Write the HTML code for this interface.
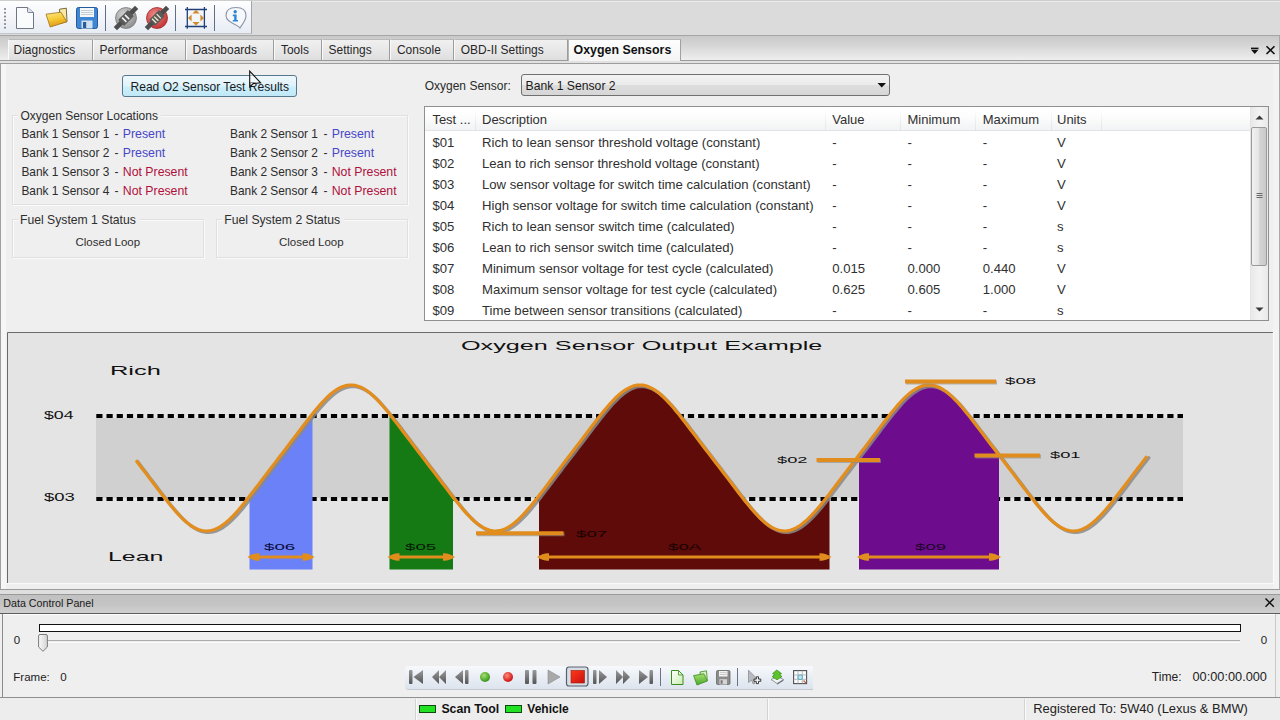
<!DOCTYPE html>
<html><head><meta charset="utf-8"><style>
*{margin:0;padding:0;box-sizing:border-box}
html,body{width:1280px;height:720px;overflow:hidden;background:#efefef;font-family:"Liberation Sans",sans-serif;color:#1c1c1c;position:relative}
.a{position:absolute}
.t{position:absolute;white-space:nowrap;line-height:1}
</style></head><body>
<div class="a" style="left:0;top:0;width:1280px;height:35px;background:#dbdbdb;border-top:1px solid #cdcdcd;box-shadow:inset 0 1px 0 #ebebeb"></div>
<div class="a" style="left:0;top:35px;width:1280px;height:1px;background:#a6a6a6"></div>
<div class="a" style="left:0;top:36px;width:1280px;height:24px;background:linear-gradient(#c9c9c9,#d6d6d6 40%,#e6e6e6 80%,#efefef)"></div>
<div class="a" style="left:0;top:1px;width:252px;height:33px;background:linear-gradient(#fefefe,#f3f5f9 50%,#e7ecf4);border-right:1px solid #a3a6ab;border-bottom:1px solid #c4c6ca"></div>

<svg class="a" style="left:0;top:0" width="252" height="34" viewBox="0 0 252 34">
 <g fill="#6a6a6a"><rect x="4.2" y="8.2" width="1.6" height="1.6"/><rect x="4.2" y="11.9" width="1.6" height="1.6"/><rect x="4.2" y="15.7" width="1.6" height="1.6"/><rect x="4.2" y="19.4" width="1.6" height="1.6"/><rect x="4.2" y="23.2" width="1.6" height="1.6"/><rect x="4.2" y="26.9" width="1.6" height="1.6"/></g>
 <!-- new doc -->
 <path d="M16.5 7.5 H27.5 L33.5 12.5 V28.5 H16.5 Z" fill="#fafbfd" stroke="#6f7686" stroke-width="1"/>
 <path d="M27.5 7.5 V11.5 Q27.5 12.5 28.5 12.5 H33.5" fill="#dde2ea" stroke="#6f7686" stroke-width="0.9"/>
 <!-- folder -->
 <defs><linearGradient id="fg" x1="0" y1="0" x2="0.3" y2="1"><stop offset="0" stop-color="#fde88c"/><stop offset="0.5" stop-color="#f6cc3a"/><stop offset="1" stop-color="#e39a12"/></linearGradient></defs>
 <path d="M59.5 9.2 L66.3 8.2 L67 21.6 L60 23.5 Z" fill="#f8e9a8" stroke="#6b5a28" stroke-width="0.9"/>
 <path d="M46 14.2 L61 12.2 L66.8 21.8 L50.2 27 Z" fill="url(#fg)" stroke="#9a7418" stroke-width="0.8"/>
 <!-- save -->
 <rect x="76.5" y="7.5" width="21" height="21" rx="2" fill="#3f86d2" stroke="#2658a0"/>
 <rect x="80" y="8" width="14" height="9" fill="#f4f6f8"/>
 <path d="M81 10.5h12M81 12.5h12M81 14.5h12" stroke="#b9c3cc" stroke-width="0.8"/>
 <rect x="81.5" y="20.5" width="11" height="8" fill="#cfe0f2"/>
 <rect x="83" y="22" width="3.2" height="6" fill="#2a5a98"/>
 <!-- separators -->
 <path d="M105.5 5V31M175.5 5V31M214.5 5V31" stroke="#5f6f88" stroke-width="1"/>
 <defs><radialGradient id="cg1" cx="0.4" cy="0.35" r="0.7"><stop offset="0" stop-color="#d6d6d6"/><stop offset="1" stop-color="#8a8a8a"/></radialGradient>
 <radialGradient id="cg2" cx="0.4" cy="0.35" r="0.7"><stop offset="0" stop-color="#f08a8a"/><stop offset="1" stop-color="#c23030"/></radialGradient></defs>
 <!-- gray connector -->
 <circle cx="126" cy="18" r="10.5" fill="url(#cg1)" stroke="#7a7a7a" stroke-width="0.8"/>
 <g transform="translate(126 18) rotate(-45)"><rect x="-15" y="-2.3" width="30" height="4.6" fill="#4d4d4d"/><rect x="-7" y="-4.3" width="14" height="8.6" rx="1" fill="#5a5a5a"/><path d="M-2.5 -3 V3 M1.5 -3 V3" stroke="#f2f2f2" stroke-width="1.6"/></g>
 <!-- red connector -->
 <circle cx="157" cy="18" r="10.5" fill="url(#cg2)" stroke="#9a2a2a" stroke-width="0.8"/>
 <g transform="translate(157 18) rotate(-45)"><rect x="-15" y="-2.3" width="30" height="4.6" fill="#4d4d4d"/><rect x="-7" y="-4.3" width="14" height="8.6" rx="1" fill="#5a5a5a"/><path d="M-4 -3 V3 M-1 -3 V3 M2.5 -3 V3" stroke="#f4ecc8" stroke-width="1.3"/></g>
 <!-- fit -->
 <rect x="190" y="12" width="12" height="12" fill="#f3f5f8"/>
 <path d="M185 9.5H207M185 26.5H207M187.3 7V28.7M204.4 7V28.7" stroke="#1e3f78" stroke-width="1.3"/>
 <path d="M196 9.8 L199.6 13.6 H192.4Z M196 25.8 L199.6 22 H192.4Z M188 18 L191.6 14.4 V21.6Z M204 18 L200.4 14.4 V21.6Z" fill="#cf8c2c"/>
 <!-- info -->
 <path d="M236 7.5 C243 7.5 246 11 246 15.5 C246 21 242 24 240 28 C238 24 226 23 226 15.5 C226 11 229 7.5 236 7.5Z" fill="#f6f8fb" stroke="#8a95a8" stroke-width="1.1"/>
 <circle cx="235.2" cy="11.8" r="1.7" fill="#2a86d4"/>
 <path d="M232.8 14.6 H236.6 V20 H238 V21.6 H232.8 V20 H234.2 V16.2 H232.8Z" fill="#2a86d4"/>
</svg>

<div class="a" style="left:0;top:60px;width:1280px;height:1px;background:#9a9a9a"></div>
<div class="a" style="left:0;top:61px;width:1280px;height:2px;background:#e2e2e2"></div>
<div class="a" style="left:0;top:63px;width:1280px;height:1px;background:#9d9d9d"></div>
<div class="a" style="left:8px;top:39px;width:85px;height:21px;background:linear-gradient(#f0f0f0,#e8e8e8 50%,#dedede);border-left:1px solid #fafafa;border-right:1px solid #9c9c9c;border-top:1px solid #b9b9b9"></div>
<div class="a" style="left:93px;top:39px;width:93px;height:21px;background:linear-gradient(#f0f0f0,#e8e8e8 50%,#dedede);border-left:1px solid #fafafa;border-right:1px solid #9c9c9c;border-top:1px solid #b9b9b9"></div>
<div class="a" style="left:186px;top:39px;width:88px;height:21px;background:linear-gradient(#f0f0f0,#e8e8e8 50%,#dedede);border-left:1px solid #fafafa;border-right:1px solid #9c9c9c;border-top:1px solid #b9b9b9"></div>
<div class="a" style="left:274px;top:39px;width:48px;height:21px;background:linear-gradient(#f0f0f0,#e8e8e8 50%,#dedede);border-left:1px solid #fafafa;border-right:1px solid #9c9c9c;border-top:1px solid #b9b9b9"></div>
<div class="a" style="left:322px;top:39px;width:68px;height:21px;background:linear-gradient(#f0f0f0,#e8e8e8 50%,#dedede);border-left:1px solid #fafafa;border-right:1px solid #9c9c9c;border-top:1px solid #b9b9b9"></div>
<div class="a" style="left:390px;top:39px;width:64px;height:21px;background:linear-gradient(#f0f0f0,#e8e8e8 50%,#dedede);border-left:1px solid #fafafa;border-right:1px solid #9c9c9c;border-top:1px solid #b9b9b9"></div>
<div class="a" style="left:454px;top:39px;width:114px;height:21px;background:linear-gradient(#f0f0f0,#e8e8e8 50%,#dedede);border-left:1px solid #fafafa;border-right:1px solid #9c9c9c;border-top:1px solid #b9b9b9"></div>
<div class="a" style="left:568px;top:39px;width:113px;height:22px;background:linear-gradient(#fefefe,#f4f4f4);border-left:1px solid #b5b5b5;border-right:1px solid #a0a0a0;border-top:1px solid #b5b5b5"></div>
<div class="t" style="left:13.6px;top:45.1px;font-size:11.95px;color:#262626;">Diagnostics</div>
<div class="t" style="left:99.6px;top:45.1px;font-size:11.95px;color:#262626;">Performance</div>
<div class="t" style="left:192.5px;top:45.1px;font-size:11.95px;color:#262626;">Dashboards</div>
<div class="t" style="left:281.0px;top:45.1px;font-size:11.95px;color:#262626;">Tools</div>
<div class="t" style="left:328.6px;top:45.1px;font-size:11.95px;color:#262626;">Settings</div>
<div class="t" style="left:397.0px;top:45.1px;font-size:11.95px;color:#262626;">Console</div>
<div class="t" style="left:460.8px;top:45.1px;font-size:11.95px;color:#262626;">OBD-II Settings</div>
<div class="t" style="left:573.5px;top:44.0px;font-size:12.40px;color:#111;font-weight:bold">Oxygen Sensors</div>
<svg class="a" style="left:1246px;top:44px" width="34" height="14" viewBox="0 0 34 14"><rect x="5" y="3.6" width="7.5" height="1.5" fill="#111"/><path d="M5 5.8 H12.5 L8.75 10 Z" fill="#111"/><path d="M20.5 2.2 L28.5 10 M28.5 2.2 L20.5 10" stroke="#111" stroke-width="1.6"/></svg>
<div class="a" style="left:0;top:64px;width:1px;height:534px;background:#a0a0a0"></div>
<div class="a" style="left:1px;top:64px;width:5px;height:534px;background:#f6f6f6"></div>
<div class="a" style="left:1273px;top:64px;width:6px;height:525px;background:#f3f3f3"></div>
<div class="a" style="left:1279px;top:36px;width:1px;height:562px;background:#a9a9a9"></div>
<div class="a" style="left:122px;top:75px;width:175px;height:22px;border:1px solid #55788a;border-radius:3px;background:linear-gradient(#eef8fc,#e2f3fb 45%,#cdeefa 55%,#c0e8f7)"></div>
<div class="t" style="left:130.5px;top:80.6px;font-size:12.05px;color:#1a1a1a;">Read O2 Sensor Test Results</div>
<div class="a" style="left:12px;top:115px;width:396px;height:90px;border:1px solid #e0e0e0;box-shadow:1px 1px 0 #fafafa inset, 1px 1px 0 #fafafa"></div>
<div class="a" style="left:18px;top:108px;width:143px;height:14px;background:#efefef"></div>
<div class="t" style="left:20.5px;top:109.8px;font-size:12.00px;color:#2e2e2e;">Oxygen Sensor Locations</div>
<div class="t" style="left:21.4px;top:127.9px;font-size:11.90px;color:#2c2c2c;"><span style="display:inline-block;width:93px">Bank 1 Sensor 1</span><span style="display:inline-block;width:8.4px">-</span><span style="font-size:12.3px;color:#4747c8">Present</span></div>
<div class="t" style="left:230.0px;top:127.9px;font-size:11.90px;color:#2c2c2c;"><span style="display:inline-block;width:93.5px">Bank 2 Sensor 1</span><span style="display:inline-block;width:8.2px">-</span><span style="font-size:12.3px;color:#4747c8">Present</span></div>
<div class="t" style="left:21.4px;top:146.9px;font-size:11.90px;color:#2c2c2c;"><span style="display:inline-block;width:93px">Bank 1 Sensor 2</span><span style="display:inline-block;width:8.4px">-</span><span style="font-size:12.3px;color:#4747c8">Present</span></div>
<div class="t" style="left:230.0px;top:146.9px;font-size:11.90px;color:#2c2c2c;"><span style="display:inline-block;width:93.5px">Bank 2 Sensor 2</span><span style="display:inline-block;width:8.2px">-</span><span style="font-size:12.3px;color:#4747c8">Present</span></div>
<div class="t" style="left:21.4px;top:165.9px;font-size:11.90px;color:#2c2c2c;"><span style="display:inline-block;width:93px">Bank 1 Sensor 3</span><span style="display:inline-block;width:8.4px">-</span><span style="font-size:12.3px;color:#b0103c">Not Present</span></div>
<div class="t" style="left:230.0px;top:165.9px;font-size:11.90px;color:#2c2c2c;"><span style="display:inline-block;width:93.5px">Bank 2 Sensor 3</span><span style="display:inline-block;width:8.2px">-</span><span style="font-size:12.3px;color:#b0103c">Not Present</span></div>
<div class="t" style="left:21.4px;top:184.9px;font-size:11.90px;color:#2c2c2c;"><span style="display:inline-block;width:93px">Bank 1 Sensor 4</span><span style="display:inline-block;width:8.4px">-</span><span style="font-size:12.3px;color:#b0103c">Not Present</span></div>
<div class="t" style="left:230.0px;top:184.9px;font-size:11.90px;color:#2c2c2c;"><span style="display:inline-block;width:93.5px">Bank 2 Sensor 4</span><span style="display:inline-block;width:8.2px">-</span><span style="font-size:12.3px;color:#b0103c">Not Present</span></div>
<div class="a" style="left:12px;top:219px;width:192px;height:39px;border:1px solid #e0e0e0;box-shadow:1px 1px 0 #fafafa inset, 1px 1px 0 #fafafa"></div>
<div class="a" style="left:216px;top:219px;width:192px;height:39px;border:1px solid #e0e0e0;box-shadow:1px 1px 0 #fafafa inset, 1px 1px 0 #fafafa"></div>
<div class="a" style="left:18px;top:212px;width:122px;height:14px;background:#efefef"></div>
<div class="a" style="left:222px;top:212px;width:122px;height:14px;background:#efefef"></div>
<div class="t" style="left:20.0px;top:213.7px;font-size:12.20px;color:#2e2e2e;">Fuel System 1 Status</div>
<div class="t" style="left:224.3px;top:213.7px;font-size:12.20px;color:#2e2e2e;">Fuel System 2 Status</div>
<div class="t" style="left:75.5px;top:237.0px;font-size:11.50px;color:#2e2e2e;">Closed Loop</div>
<div class="t" style="left:279.0px;top:237.0px;font-size:11.50px;color:#2e2e2e;">Closed Loop</div>
<svg class="a" style="left:245px;top:68px" width="20" height="24" viewBox="245 68 20 24"><path d="M249.7 71.2 V87 L253.2 83.6 L260.6 82.8 Z" fill="#fff" fill-opacity="0.55" stroke="#111" stroke-width="1.1" stroke-linejoin="miter"/></svg>
<div class="t" style="left:424.7px;top:79.8px;font-size:12.00px;color:#2a2a2a;">Oxygen Sensor:</div>
<div class="a" style="left:521px;top:74px;width:369px;height:22px;border:1px solid #707070;border-radius:3px;background:linear-gradient(#f3f3f3,#ebebeb 50%,#dddddd 52%,#d6d6d6)"></div>
<div class="t" style="left:525.5px;top:79.7px;font-size:12.20px;color:#1a1a1a;">Bank 1 Sensor 2</div>
<svg class="a" style="left:876px;top:82px" width="12" height="8" viewBox="0 0 12 8"><path d="M1.5 1 H10 L5.75 5.5Z" fill="#111"/></svg>
<div class="a" style="left:424px;top:106px;width:845px;height:215px;background:#fff;border:1px solid #8e8f8f"></div>
<div class="a" style="left:425px;top:107px;width:825px;height:23px;background:linear-gradient(#ffffff,#fdfdfd 40%,#f2f3f4)"></div>
<div class="a" style="left:425px;top:130px;width:825px;height:1px;background:#e3e4e6"></div>
<div class="a" style="left:475px;top:108px;width:1px;height:22px;background:linear-gradient(#ffffff,#e2e3e5)"></div>
<div class="a" style="left:825px;top:108px;width:1px;height:22px;background:linear-gradient(#ffffff,#e2e3e5)"></div>
<div class="a" style="left:900px;top:108px;width:1px;height:22px;background:linear-gradient(#ffffff,#e2e3e5)"></div>
<div class="a" style="left:975px;top:108px;width:1px;height:22px;background:linear-gradient(#ffffff,#e2e3e5)"></div>
<div class="a" style="left:1051px;top:108px;width:1px;height:22px;background:linear-gradient(#ffffff,#e2e3e5)"></div>
<div class="a" style="left:1101px;top:108px;width:1px;height:22px;background:linear-gradient(#ffffff,#e2e3e5)"></div>
<div class="t" style="left:432.4px;top:113.0px;font-size:13.00px;color:#303030;">Test ...</div>
<div class="t" style="left:482.0px;top:113.0px;font-size:13.00px;color:#303030;">Description</div>
<div class="t" style="left:832.3px;top:113.0px;font-size:13.00px;color:#303030;">Value</div>
<div class="t" style="left:907.5px;top:113.0px;font-size:13.00px;color:#303030;">Minimum</div>
<div class="t" style="left:982.7px;top:113.0px;font-size:13.00px;color:#303030;">Maximum</div>
<div class="t" style="left:1057.0px;top:113.0px;font-size:13.00px;color:#303030;">Units</div>
<div class="t" style="left:432.4px;top:135.6px;font-size:13.15px;color:#303030;">$01</div>
<div class="t" style="left:482.0px;top:135.6px;font-size:13.15px;color:#303030;">Rich to lean sensor threshold voltage (constant)</div>
<div class="t" style="left:832.3px;top:135.6px;font-size:13.15px;color:#303030;">-</div>
<div class="t" style="left:907.5px;top:135.6px;font-size:13.15px;color:#303030;">-</div>
<div class="t" style="left:982.7px;top:135.6px;font-size:13.15px;color:#303030;">-</div>
<div class="t" style="left:1057.0px;top:135.6px;font-size:13.15px;color:#303030;">V</div>
<div class="t" style="left:432.4px;top:156.6px;font-size:13.15px;color:#303030;">$02</div>
<div class="t" style="left:482.0px;top:156.6px;font-size:13.15px;color:#303030;">Lean to rich sensor threshold voltage (constant)</div>
<div class="t" style="left:832.3px;top:156.6px;font-size:13.15px;color:#303030;">-</div>
<div class="t" style="left:907.5px;top:156.6px;font-size:13.15px;color:#303030;">-</div>
<div class="t" style="left:982.7px;top:156.6px;font-size:13.15px;color:#303030;">-</div>
<div class="t" style="left:1057.0px;top:156.6px;font-size:13.15px;color:#303030;">V</div>
<div class="t" style="left:432.4px;top:177.6px;font-size:13.15px;color:#303030;">$03</div>
<div class="t" style="left:482.0px;top:177.6px;font-size:13.15px;color:#303030;">Low sensor voltage for switch time calculation (constant)</div>
<div class="t" style="left:832.3px;top:177.6px;font-size:13.15px;color:#303030;">-</div>
<div class="t" style="left:907.5px;top:177.6px;font-size:13.15px;color:#303030;">-</div>
<div class="t" style="left:982.7px;top:177.6px;font-size:13.15px;color:#303030;">-</div>
<div class="t" style="left:1057.0px;top:177.6px;font-size:13.15px;color:#303030;">V</div>
<div class="t" style="left:432.4px;top:198.6px;font-size:13.15px;color:#303030;">$04</div>
<div class="t" style="left:482.0px;top:198.6px;font-size:13.15px;color:#303030;">High sensor voltage for switch time calculation (constant)</div>
<div class="t" style="left:832.3px;top:198.6px;font-size:13.15px;color:#303030;">-</div>
<div class="t" style="left:907.5px;top:198.6px;font-size:13.15px;color:#303030;">-</div>
<div class="t" style="left:982.7px;top:198.6px;font-size:13.15px;color:#303030;">-</div>
<div class="t" style="left:1057.0px;top:198.6px;font-size:13.15px;color:#303030;">V</div>
<div class="t" style="left:432.4px;top:219.6px;font-size:13.15px;color:#303030;">$05</div>
<div class="t" style="left:482.0px;top:219.6px;font-size:13.15px;color:#303030;">Rich to lean sensor switch time (calculated)</div>
<div class="t" style="left:832.3px;top:219.6px;font-size:13.15px;color:#303030;">-</div>
<div class="t" style="left:907.5px;top:219.6px;font-size:13.15px;color:#303030;">-</div>
<div class="t" style="left:982.7px;top:219.6px;font-size:13.15px;color:#303030;">-</div>
<div class="t" style="left:1057.0px;top:219.6px;font-size:13.15px;color:#303030;">s</div>
<div class="t" style="left:432.4px;top:240.6px;font-size:13.15px;color:#303030;">$06</div>
<div class="t" style="left:482.0px;top:240.6px;font-size:13.15px;color:#303030;">Lean to rich sensor switch time (calculated)</div>
<div class="t" style="left:832.3px;top:240.6px;font-size:13.15px;color:#303030;">-</div>
<div class="t" style="left:907.5px;top:240.6px;font-size:13.15px;color:#303030;">-</div>
<div class="t" style="left:982.7px;top:240.6px;font-size:13.15px;color:#303030;">-</div>
<div class="t" style="left:1057.0px;top:240.6px;font-size:13.15px;color:#303030;">s</div>
<div class="t" style="left:432.4px;top:261.6px;font-size:13.15px;color:#303030;">$07</div>
<div class="t" style="left:482.0px;top:261.6px;font-size:13.15px;color:#303030;">Minimum sensor voltage for test cycle (calculated)</div>
<div class="t" style="left:832.3px;top:261.6px;font-size:13.15px;color:#303030;">0.015</div>
<div class="t" style="left:907.5px;top:261.6px;font-size:13.15px;color:#303030;">0.000</div>
<div class="t" style="left:982.7px;top:261.6px;font-size:13.15px;color:#303030;">0.440</div>
<div class="t" style="left:1057.0px;top:261.6px;font-size:13.15px;color:#303030;">V</div>
<div class="t" style="left:432.4px;top:282.6px;font-size:13.15px;color:#303030;">$08</div>
<div class="t" style="left:482.0px;top:282.6px;font-size:13.15px;color:#303030;">Maximum sensor voltage for test cycle (calculated)</div>
<div class="t" style="left:832.3px;top:282.6px;font-size:13.15px;color:#303030;">0.625</div>
<div class="t" style="left:907.5px;top:282.6px;font-size:13.15px;color:#303030;">0.605</div>
<div class="t" style="left:982.7px;top:282.6px;font-size:13.15px;color:#303030;">1.000</div>
<div class="t" style="left:1057.0px;top:282.6px;font-size:13.15px;color:#303030;">V</div>
<div class="t" style="left:432.4px;top:303.6px;font-size:13.15px;color:#303030;">$09</div>
<div class="t" style="left:482.0px;top:303.6px;font-size:13.15px;color:#303030;">Time between sensor transitions (calculated)</div>
<div class="t" style="left:832.3px;top:303.6px;font-size:13.15px;color:#303030;">-</div>
<div class="t" style="left:907.5px;top:303.6px;font-size:13.15px;color:#303030;">-</div>
<div class="t" style="left:982.7px;top:303.6px;font-size:13.15px;color:#303030;">-</div>
<div class="t" style="left:1057.0px;top:303.6px;font-size:13.15px;color:#303030;">s</div>
<div class="a" style="left:1250px;top:107px;width:18px;height:213px;background:linear-gradient(90deg,#e9e9e9,#f3f3f3 50%,#e9e9e9);border-left:1px solid #e4e4e4"></div>
<div class="a" style="left:1251px;top:127px;width:16px;height:139px;border:1px solid #9a9a9a;border-radius:2px;background:linear-gradient(90deg,#f1f1f1,#e6e6e6 45%,#d4d4d4 55%,#c9c9c9)"></div>
<svg class="a" style="left:1250px;top:107px" width="18" height="213" viewBox="0 0 18 213"><path d="M5.5 12.5 L9.5 8.5 L13.5 12.5Z" fill="#3a3a3a"/><path d="M5.5 200.5 L9.5 204.5 L13.5 200.5Z" fill="#3a3a3a"/><path d="M6.5 86.5h6M6.5 88.5h6M6.5 90.5h6" stroke="#6a6a6a" stroke-width="1"/></svg>
<svg class="a" style="left:0;top:320px" width="1280" height="280" viewBox="0 320 1280 280">
<rect x="7" y="332" width="1266" height="251" fill="#e4e4e4"/>
<path d="M7.5 583 V332.5 H1273" stroke="#6a6a6a" stroke-width="1" fill="none"/>
<path d="M7 583.5 H1273.5 V332" stroke="#fafafa" stroke-width="1.2" fill="none"/>
<rect x="96" y="418" width="1087" height="80" fill="#d0d0d0"/>
<path d="M96.3 416 H1183 M96.3 499 H1183" stroke="#000" stroke-width="4" stroke-dasharray="6.2 4" fill="none"/>
<path d="M249.5 569.5 L249.5 496.3 L251.5 493.7 L253.5 491.1 L255.5 488.5 L257.5 485.8 L259.5 483.2 L261.5 480.6 L263.5 477.9 L265.5 475.3 L267.5 472.6 L269.5 470.0 L271.5 467.4 L273.5 464.8 L275.5 462.2 L277.5 459.6 L279.5 457.0 L281.5 454.3 L283.5 451.7 L285.5 449.1 L287.5 446.5 L289.5 443.9 L291.5 441.2 L293.5 438.6 L295.5 436.0 L297.5 433.3 L299.5 430.7 L301.5 428.1 L303.5 425.4 L305.5 422.8 L307.5 420.2 L309.5 417.6 L311.5 415.1 L312.5 413.9 L312.5 569.5 Z" fill="#6a81f7"/>
<path d="M389.5 569.5 L389.5 414.0 L391.5 416.5 L393.5 419.1 L395.5 421.6 L397.5 424.3 L399.5 426.9 L401.5 429.5 L403.5 432.1 L405.5 434.8 L407.5 437.4 L409.5 440.1 L411.5 442.7 L413.5 445.3 L415.5 447.9 L417.5 450.6 L419.5 453.2 L421.5 455.8 L423.5 458.4 L425.5 461.0 L427.5 463.6 L429.5 466.2 L431.5 468.8 L433.5 471.5 L435.5 474.1 L437.5 476.7 L439.5 479.4 L441.5 482.0 L443.5 484.6 L445.5 487.3 L447.5 489.9 L449.5 492.5 L451.5 495.1 L453.0 497.1 L453.0 569.5 Z" fill="#167a14"/>
<path d="M539.0 569.5 L539.0 495.6 L541.0 493.1 L543.0 490.4 L545.0 487.8 L547.0 485.2 L549.0 482.5 L551.0 479.9 L553.0 477.3 L555.0 474.6 L557.0 472.0 L559.0 469.4 L561.0 466.7 L563.0 464.1 L565.0 461.5 L567.0 458.9 L569.0 456.3 L571.0 453.7 L573.0 451.1 L575.0 448.5 L577.0 445.8 L579.0 443.2 L581.0 440.6 L583.0 438.0 L585.0 435.3 L587.0 432.7 L589.0 430.0 L591.0 427.4 L593.0 424.8 L595.0 422.2 L597.0 419.6 L599.0 417.0 L601.0 414.5 L603.0 412.0 L605.0 409.6 L607.0 407.2 L609.0 404.9 L611.0 402.6 L613.0 400.5 L615.0 398.4 L617.0 396.5 L619.0 394.7 L621.0 393.0 L623.0 391.5 L625.0 390.1 L627.0 388.8 L629.0 387.8 L631.0 386.9 L633.0 386.1 L635.0 385.6 L637.0 385.2 L639.0 385.0 L641.0 385.0 L643.0 385.2 L645.0 385.6 L647.0 386.2 L649.0 386.9 L651.0 387.8 L653.0 388.9 L655.0 390.1 L657.0 391.5 L659.0 393.1 L661.0 394.8 L663.0 396.6 L665.0 398.5 L667.0 400.6 L669.0 402.7 L671.0 405.0 L673.0 407.3 L675.0 409.7 L677.0 412.1 L679.0 414.6 L681.0 417.1 L683.0 419.7 L685.0 422.3 L687.0 424.9 L689.0 427.5 L691.0 430.2 L693.0 432.8 L695.0 435.4 L697.0 438.1 L699.0 440.7 L701.0 443.4 L703.0 446.0 L705.0 448.6 L707.0 451.2 L709.0 453.8 L711.0 456.4 L713.0 459.0 L715.0 461.7 L717.0 464.3 L719.0 466.9 L721.0 469.5 L723.0 472.1 L725.0 474.8 L727.0 477.4 L729.0 480.0 L731.0 482.7 L733.0 485.3 L735.0 487.9 L737.0 490.6 L739.0 493.2 L741.0 495.8 L743.0 498.4 L745.0 500.9 L747.0 503.4 L749.0 505.8 L751.0 508.2 L753.0 510.6 L755.0 512.8 L757.0 515.0 L759.0 517.1 L761.0 519.0 L763.0 520.9 L765.0 522.6 L767.0 524.2 L769.0 525.6 L771.0 526.9 L773.0 528.0 L775.0 528.9 L777.0 529.7 L779.0 530.3 L781.0 530.7 L783.0 531.0 L785.0 531.0 L787.0 530.8 L789.0 530.5 L791.0 530.0 L793.0 529.3 L795.0 528.4 L797.0 527.4 L799.0 526.2 L801.0 524.8 L803.0 523.3 L805.0 521.6 L807.0 519.9 L809.0 517.9 L811.0 515.9 L813.0 513.8 L815.0 511.6 L817.0 509.3 L819.0 506.9 L821.0 504.5 L823.0 502.0 L825.0 499.5 L827.0 496.9 L829.0 494.4 L829.5 493.7 L829.5 569.5 Z" fill="#5e0b09"/>
<path d="M859.0 569.5 L859.0 455.0 L861.0 452.4 L863.0 449.8 L865.0 447.2 L867.0 444.5 L869.0 441.9 L871.0 439.3 L873.0 436.6 L875.0 434.0 L877.0 431.4 L879.0 428.7 L881.0 426.1 L883.0 423.5 L885.0 420.9 L887.0 418.3 L889.0 415.7 L891.0 413.2 L893.0 410.8 L895.0 408.4 L897.0 406.0 L899.0 403.7 L901.0 401.5 L903.0 399.5 L905.0 397.5 L907.0 395.6 L909.0 393.8 L911.0 392.2 L913.0 390.8 L915.0 389.4 L917.0 388.3 L919.0 387.3 L921.0 386.5 L923.0 385.8 L925.0 385.4 L927.0 385.1 L929.0 385.0 L931.0 385.1 L933.0 385.4 L935.0 385.9 L937.0 386.5 L939.0 387.3 L941.0 388.3 L943.0 389.5 L945.0 390.8 L947.0 392.3 L949.0 393.9 L951.0 395.7 L953.0 397.6 L955.0 399.6 L957.0 401.7 L959.0 403.8 L961.0 406.1 L963.0 408.5 L965.0 410.9 L967.0 413.4 L969.0 415.9 L971.0 418.4 L973.0 421.0 L975.0 423.6 L977.0 426.2 L979.0 428.9 L981.0 431.5 L983.0 434.1 L985.0 436.8 L987.0 439.4 L989.0 442.0 L991.0 444.7 L993.0 447.3 L995.0 449.9 L997.0 452.5 L999.0 455.1 L999.0 569.5 Z" fill="#6e0c8e"/>
<path d="M136.0 460.3 L139.0 464.3 L142.0 468.2 L145.0 472.1 L148.0 476.1 L151.0 480.0 L154.0 484.0 L157.0 487.9 L160.0 491.9 L163.0 495.8 L166.0 499.6 L169.0 503.4 L172.0 507.0 L175.0 510.6 L178.0 513.9 L181.0 517.1 L184.0 520.0 L187.0 522.6 L190.0 524.9 L193.0 526.9 L196.0 528.5 L199.0 529.7 L202.0 530.5 L205.0 531.0 L208.0 530.9 L211.0 530.5 L214.0 529.7 L217.0 528.4 L220.0 526.8 L223.0 524.8 L226.0 522.5 L229.0 519.9 L232.0 517.0 L235.0 513.8 L238.0 510.5 L241.0 506.9 L244.0 503.3 L247.0 499.5 L250.0 495.6 L253.0 491.7 L256.0 487.8 L259.0 483.9 L262.0 479.9 L265.0 475.9 L268.0 472.0 L271.0 468.1 L274.0 464.1 L277.0 460.2 L280.0 456.3 L283.0 452.4 L286.0 448.5 L289.0 444.5 L292.0 440.6 L295.0 436.6 L298.0 432.7 L301.0 428.7 L304.0 424.8 L307.0 420.9 L310.0 417.0 L313.0 413.2 L316.0 409.6 L319.0 406.0 L322.0 402.6 L325.0 399.5 L328.0 396.5 L331.0 393.8 L334.0 391.5 L337.0 389.4 L340.0 387.8 L343.0 386.5 L346.0 385.6 L349.0 385.1 L352.0 385.0 L355.0 385.4 L358.0 386.2 L361.0 387.3 L364.0 388.9 L367.0 390.8 L370.0 393.1 L373.0 395.7 L376.0 398.5 L379.0 401.7 L382.0 405.0 L385.0 408.5 L388.0 412.1 L391.0 415.9 L394.0 419.7 L397.0 423.6 L400.0 427.5 L403.0 431.5 L406.0 435.4 L409.0 439.4 L412.0 443.4 L415.0 447.3 L418.0 451.2 L421.0 455.1 L424.0 459.0 L427.0 463.0 L430.0 466.9 L433.0 470.8 L436.0 474.8 L439.0 478.7 L442.0 482.7 L445.0 486.6 L448.0 490.6 L451.0 494.5 L454.0 498.4 L457.0 502.1 L460.0 505.8 L463.0 509.4 L466.0 512.8 L469.0 516.0 L472.0 519.0 L475.0 521.7 L478.0 524.2 L481.0 526.2 L484.0 528.0 L487.0 529.3 L490.0 530.3 L493.0 530.9 L496.0 531.0 L499.0 530.7 L502.0 530.0 L505.0 528.9 L508.0 527.4 L511.0 525.5 L514.0 523.3 L517.0 520.8 L520.0 517.9 L523.0 514.9 L526.0 511.6 L529.0 508.1 L532.0 504.5 L535.0 500.8 L538.0 496.9 L541.0 493.1 L544.0 489.1 L547.0 485.2 L550.0 481.2 L553.0 477.3 L556.0 473.3 L559.0 469.4 L562.0 465.4 L565.0 461.5 L568.0 457.6 L571.0 453.7 L574.0 449.8 L577.0 445.8 L580.0 441.9 L583.0 438.0 L586.0 434.0 L589.0 430.0 L592.0 426.1 L595.0 422.2 L598.0 418.3 L601.0 414.5 L604.0 410.8 L607.0 407.2 L610.0 403.7 L613.0 400.5 L616.0 397.5 L619.0 394.7 L622.0 392.2 L625.0 390.1 L628.0 388.3 L631.0 386.9 L634.0 385.8 L637.0 385.2 L640.0 385.0 L643.0 385.2 L646.0 385.9 L649.0 386.9 L652.0 388.3 L655.0 390.1 L658.0 392.3 L661.0 394.8 L664.0 397.6 L667.0 400.6 L670.0 403.8 L673.0 407.3 L676.0 410.9 L679.0 414.6 L682.0 418.4 L685.0 422.3 L688.0 426.2 L691.0 430.2 L694.0 434.1 L697.0 438.1 L700.0 442.0 L703.0 446.0 L706.0 449.9 L709.0 453.8 L712.0 457.7 L715.0 461.7 L718.0 465.6 L721.0 469.5 L724.0 473.4 L727.0 477.4 L730.0 481.3 L733.0 485.3 L736.0 489.3 L739.0 493.2 L742.0 497.1 L745.0 500.9 L748.0 504.6 L751.0 508.2 L754.0 511.7 L757.0 515.0 L760.0 518.0 L763.0 520.9 L766.0 523.4 L769.0 525.6 L772.0 527.4 L775.0 528.9 L778.0 530.0 L781.0 530.7 L784.0 531.0 L787.0 530.8 L790.0 530.3 L793.0 529.3 L796.0 527.9 L799.0 526.2 L802.0 524.1 L805.0 521.6 L808.0 518.9 L811.0 515.9 L814.0 512.7 L817.0 509.3 L820.0 505.7 L823.0 502.0 L826.0 498.2 L829.0 494.4 L832.0 490.4 L835.0 486.5 L838.0 482.5 L841.0 478.6 L844.0 474.6 L847.0 470.7 L850.0 466.7 L853.0 462.8 L856.0 458.9 L859.0 455.0 L862.0 451.1 L865.0 447.2 L868.0 443.2 L871.0 439.3 L874.0 435.3 L877.0 431.4 L880.0 427.4 L883.0 423.5 L886.0 419.6 L889.0 415.7 L892.0 412.0 L895.0 408.4 L898.0 404.9 L901.0 401.5 L904.0 398.4 L907.0 395.6 L910.0 393.0 L913.0 390.8 L916.0 388.8 L919.0 387.3 L922.0 386.1 L925.0 385.4 L928.0 385.0 L931.0 385.1 L934.0 385.6 L937.0 386.5 L940.0 387.8 L943.0 389.5 L946.0 391.5 L949.0 393.9 L952.0 396.6 L955.0 399.6 L958.0 402.7 L961.0 406.1 L964.0 409.7 L967.0 413.4 L970.0 417.1 L973.0 421.0 L976.0 424.9 L979.0 428.9 L982.0 432.8 L985.0 436.8 L988.0 440.7 L991.0 444.7 L994.0 448.6 L997.0 452.5 L1000.0 456.4 L1003.0 460.3 L1006.0 464.3 L1009.0 468.2 L1012.0 472.1 L1015.0 476.1 L1018.0 480.0 L1021.0 484.0 L1024.0 487.9 L1027.0 491.9 L1030.0 495.8 L1033.0 499.6 L1036.0 503.4 L1039.0 507.0 L1042.0 510.6 L1045.0 513.9 L1048.0 517.1 L1051.0 520.0 L1054.0 522.6 L1057.0 524.9 L1060.0 526.9 L1063.0 528.5 L1066.0 529.7 L1069.0 530.5 L1072.0 531.0 L1075.0 530.9 L1078.0 530.5 L1081.0 529.7 L1084.0 528.4 L1087.0 526.8 L1090.0 524.8 L1093.0 522.5 L1096.0 519.9 L1099.0 517.0 L1102.0 513.8 L1105.0 510.5 L1108.0 506.9 L1111.0 503.3 L1114.0 499.5 L1117.0 495.6 L1120.0 491.7 L1123.0 487.8 L1126.0 483.9 L1129.0 479.9 L1132.0 475.9 L1135.0 472.0 L1138.0 468.1 L1141.0 464.1 L1144.0 460.2 L1147.0 456.3" transform="translate(1.8 1.5)" stroke="#8a8a8a" stroke-width="3.2" fill="none" stroke-linecap="round" opacity="0.85"/>
<path d="M136.0 460.3 L139.0 464.3 L142.0 468.2 L145.0 472.1 L148.0 476.1 L151.0 480.0 L154.0 484.0 L157.0 487.9 L160.0 491.9 L163.0 495.8 L166.0 499.6 L169.0 503.4 L172.0 507.0 L175.0 510.6 L178.0 513.9 L181.0 517.1 L184.0 520.0 L187.0 522.6 L190.0 524.9 L193.0 526.9 L196.0 528.5 L199.0 529.7 L202.0 530.5 L205.0 531.0 L208.0 530.9 L211.0 530.5 L214.0 529.7 L217.0 528.4 L220.0 526.8 L223.0 524.8 L226.0 522.5 L229.0 519.9 L232.0 517.0 L235.0 513.8 L238.0 510.5 L241.0 506.9 L244.0 503.3 L247.0 499.5 L250.0 495.6 L253.0 491.7 L256.0 487.8 L259.0 483.9 L262.0 479.9 L265.0 475.9 L268.0 472.0 L271.0 468.1 L274.0 464.1 L277.0 460.2 L280.0 456.3 L283.0 452.4 L286.0 448.5 L289.0 444.5 L292.0 440.6 L295.0 436.6 L298.0 432.7 L301.0 428.7 L304.0 424.8 L307.0 420.9 L310.0 417.0 L313.0 413.2 L316.0 409.6 L319.0 406.0 L322.0 402.6 L325.0 399.5 L328.0 396.5 L331.0 393.8 L334.0 391.5 L337.0 389.4 L340.0 387.8 L343.0 386.5 L346.0 385.6 L349.0 385.1 L352.0 385.0 L355.0 385.4 L358.0 386.2 L361.0 387.3 L364.0 388.9 L367.0 390.8 L370.0 393.1 L373.0 395.7 L376.0 398.5 L379.0 401.7 L382.0 405.0 L385.0 408.5 L388.0 412.1 L391.0 415.9 L394.0 419.7 L397.0 423.6 L400.0 427.5 L403.0 431.5 L406.0 435.4 L409.0 439.4 L412.0 443.4 L415.0 447.3 L418.0 451.2 L421.0 455.1 L424.0 459.0 L427.0 463.0 L430.0 466.9 L433.0 470.8 L436.0 474.8 L439.0 478.7 L442.0 482.7 L445.0 486.6 L448.0 490.6 L451.0 494.5 L454.0 498.4 L457.0 502.1 L460.0 505.8 L463.0 509.4 L466.0 512.8 L469.0 516.0 L472.0 519.0 L475.0 521.7 L478.0 524.2 L481.0 526.2 L484.0 528.0 L487.0 529.3 L490.0 530.3 L493.0 530.9 L496.0 531.0 L499.0 530.7 L502.0 530.0 L505.0 528.9 L508.0 527.4 L511.0 525.5 L514.0 523.3 L517.0 520.8 L520.0 517.9 L523.0 514.9 L526.0 511.6 L529.0 508.1 L532.0 504.5 L535.0 500.8 L538.0 496.9 L541.0 493.1 L544.0 489.1 L547.0 485.2 L550.0 481.2 L553.0 477.3 L556.0 473.3 L559.0 469.4 L562.0 465.4 L565.0 461.5 L568.0 457.6 L571.0 453.7 L574.0 449.8 L577.0 445.8 L580.0 441.9 L583.0 438.0 L586.0 434.0 L589.0 430.0 L592.0 426.1 L595.0 422.2 L598.0 418.3 L601.0 414.5 L604.0 410.8 L607.0 407.2 L610.0 403.7 L613.0 400.5 L616.0 397.5 L619.0 394.7 L622.0 392.2 L625.0 390.1 L628.0 388.3 L631.0 386.9 L634.0 385.8 L637.0 385.2 L640.0 385.0 L643.0 385.2 L646.0 385.9 L649.0 386.9 L652.0 388.3 L655.0 390.1 L658.0 392.3 L661.0 394.8 L664.0 397.6 L667.0 400.6 L670.0 403.8 L673.0 407.3 L676.0 410.9 L679.0 414.6 L682.0 418.4 L685.0 422.3 L688.0 426.2 L691.0 430.2 L694.0 434.1 L697.0 438.1 L700.0 442.0 L703.0 446.0 L706.0 449.9 L709.0 453.8 L712.0 457.7 L715.0 461.7 L718.0 465.6 L721.0 469.5 L724.0 473.4 L727.0 477.4 L730.0 481.3 L733.0 485.3 L736.0 489.3 L739.0 493.2 L742.0 497.1 L745.0 500.9 L748.0 504.6 L751.0 508.2 L754.0 511.7 L757.0 515.0 L760.0 518.0 L763.0 520.9 L766.0 523.4 L769.0 525.6 L772.0 527.4 L775.0 528.9 L778.0 530.0 L781.0 530.7 L784.0 531.0 L787.0 530.8 L790.0 530.3 L793.0 529.3 L796.0 527.9 L799.0 526.2 L802.0 524.1 L805.0 521.6 L808.0 518.9 L811.0 515.9 L814.0 512.7 L817.0 509.3 L820.0 505.7 L823.0 502.0 L826.0 498.2 L829.0 494.4 L832.0 490.4 L835.0 486.5 L838.0 482.5 L841.0 478.6 L844.0 474.6 L847.0 470.7 L850.0 466.7 L853.0 462.8 L856.0 458.9 L859.0 455.0 L862.0 451.1 L865.0 447.2 L868.0 443.2 L871.0 439.3 L874.0 435.3 L877.0 431.4 L880.0 427.4 L883.0 423.5 L886.0 419.6 L889.0 415.7 L892.0 412.0 L895.0 408.4 L898.0 404.9 L901.0 401.5 L904.0 398.4 L907.0 395.6 L910.0 393.0 L913.0 390.8 L916.0 388.8 L919.0 387.3 L922.0 386.1 L925.0 385.4 L928.0 385.0 L931.0 385.1 L934.0 385.6 L937.0 386.5 L940.0 387.8 L943.0 389.5 L946.0 391.5 L949.0 393.9 L952.0 396.6 L955.0 399.6 L958.0 402.7 L961.0 406.1 L964.0 409.7 L967.0 413.4 L970.0 417.1 L973.0 421.0 L976.0 424.9 L979.0 428.9 L982.0 432.8 L985.0 436.8 L988.0 440.7 L991.0 444.7 L994.0 448.6 L997.0 452.5 L1000.0 456.4 L1003.0 460.3 L1006.0 464.3 L1009.0 468.2 L1012.0 472.1 L1015.0 476.1 L1018.0 480.0 L1021.0 484.0 L1024.0 487.9 L1027.0 491.9 L1030.0 495.8 L1033.0 499.6 L1036.0 503.4 L1039.0 507.0 L1042.0 510.6 L1045.0 513.9 L1048.0 517.1 L1051.0 520.0 L1054.0 522.6 L1057.0 524.9 L1060.0 526.9 L1063.0 528.5 L1066.0 529.7 L1069.0 530.5 L1072.0 531.0 L1075.0 530.9 L1078.0 530.5 L1081.0 529.7 L1084.0 528.4 L1087.0 526.8 L1090.0 524.8 L1093.0 522.5 L1096.0 519.9 L1099.0 517.0 L1102.0 513.8 L1105.0 510.5 L1108.0 506.9 L1111.0 503.3 L1114.0 499.5 L1117.0 495.6 L1120.0 491.7 L1123.0 487.8 L1126.0 483.9 L1129.0 479.9 L1132.0 475.9 L1135.0 472.0 L1138.0 468.1 L1141.0 464.1 L1144.0 460.2 L1147.0 456.3" stroke="#e38e1c" stroke-width="3.2" fill="none" stroke-linecap="butt"/>
<path d="M476.0 533.3 H563.5" stroke="#8b8b8b" stroke-width="4" transform="translate(1 1)" opacity="0.6"/>
<path d="M476.0 533.3 H563.5" stroke="#e08d1e" stroke-width="4"/>
<path d="M816.5 460.0 H880.0" stroke="#8b8b8b" stroke-width="4" transform="translate(1 1)" opacity="0.6"/>
<path d="M816.5 460.0 H880.0" stroke="#e08d1e" stroke-width="4"/>
<path d="M905.0 381.5 H996.0" stroke="#8b8b8b" stroke-width="4" transform="translate(1 1)" opacity="0.6"/>
<path d="M905.0 381.5 H996.0" stroke="#e08d1e" stroke-width="4"/>
<path d="M974.5 455.4 H1040.0" stroke="#8b8b8b" stroke-width="4" transform="translate(1 1)" opacity="0.6"/>
<path d="M974.5 455.4 H1040.0" stroke="#e08d1e" stroke-width="4"/>
<path d="M253.5 557.0 H308.5" stroke="#e08d1e" stroke-width="3"/><path d="M247.5 557.0 Q253.5 552.8 259.5 553.2 V560.8 Q253.5 561.2 247.5 557.0 Z" fill="#e08d1e"/><path d="M314.5 557.0 Q308.5 552.8 302.5 553.2 V560.8 Q308.5 561.2 314.5 557.0 Z" fill="#e08d1e"/>
<path d="M393.5 557.0 H449.0" stroke="#e08d1e" stroke-width="3"/><path d="M387.5 557.0 Q393.5 552.8 399.5 553.2 V560.8 Q393.5 561.2 387.5 557.0 Z" fill="#e08d1e"/><path d="M455.0 557.0 Q449.0 552.8 443.0 553.2 V560.8 Q449.0 561.2 455.0 557.0 Z" fill="#e08d1e"/>
<path d="M543.0 557.0 H825.5" stroke="#e08d1e" stroke-width="3"/><path d="M537.0 557.0 Q543.0 552.8 549.0 553.2 V560.8 Q543.0 561.2 537.0 557.0 Z" fill="#e08d1e"/><path d="M831.5 557.0 Q825.5 552.8 819.5 553.2 V560.8 Q825.5 561.2 831.5 557.0 Z" fill="#e08d1e"/>
<path d="M863.0 557.0 H995.0" stroke="#e08d1e" stroke-width="3"/><path d="M857.0 557.0 Q863.0 552.8 869.0 553.2 V560.8 Q863.0 561.2 857.0 557.0 Z" fill="#e08d1e"/><path d="M1001.0 557.0 Q995.0 552.8 989.0 553.2 V560.8 Q995.0 561.2 1001.0 557.0 Z" fill="#e08d1e"/>
</svg>
<div class="t" style="left:461.0px;top:340.3px;font-size:12.00px;color:#111;transform:scaleX(2.100);transform-origin:0 0;letter-spacing:0">Oxygen Sensor Output Example</div>
<div class="t" style="left:110.3px;top:364.6px;font-size:12.60px;color:#111;transform:scaleX(2.020);transform-origin:0 0;">Rich</div>
<div class="t" style="left:107.8px;top:551.3px;font-size:12.60px;color:#111;transform:scaleX(1.980);transform-origin:0 0;">Lean</div>
<div class="t" style="left:44.0px;top:410.6px;font-size:10.30px;color:#111;transform:scaleX(1.720);transform-origin:0 0;">$04</div>
<div class="t" style="left:44.0px;top:493.2px;font-size:10.00px;color:#111;transform:scaleX(1.850);transform-origin:0 0;">$03</div>
<div class="t" style="left:777.0px;top:455.8px;font-size:8.50px;color:#111;transform:scaleX(2.150);transform-origin:0 0;">$02</div>
<div class="t" style="left:1004.6px;top:377.1px;font-size:8.50px;color:#111;transform:scaleX(2.200);transform-origin:0 0;">$08</div>
<div class="t" style="left:1050.4px;top:451.1px;font-size:8.50px;color:#111;transform:scaleX(2.150);transform-origin:0 0;">$01</div>
<div class="t" style="left:264.0px;top:542.8px;font-size:8.50px;color:#0a0a40;transform:scaleX(2.200);transform-origin:0 0;">$06</div>
<div class="t" style="left:404.5px;top:542.8px;font-size:8.50px;color:#051a05;transform:scaleX(2.200);transform-origin:0 0;">$05</div>
<div class="t" style="left:668.0px;top:543.3px;font-size:8.50px;color:#180202;transform:scaleX(2.200);transform-origin:0 0;">$0A</div>
<div class="t" style="left:915.0px;top:543.3px;font-size:8.50px;color:#1c0528;transform:scaleX(2.200);transform-origin:0 0;">$09</div>
<div class="t" style="left:576.0px;top:529.8px;font-size:8.50px;color:#180202;transform:scaleX(2.200);transform-origin:0 0;">$07</div>
<div class="a" style="left:0;top:589px;width:1280px;height:1px;background:#9b9b9b"></div>
<div class="a" style="left:0;top:590px;width:1280px;height:4px;background:#dedede"></div>
<div class="a" style="left:0;top:594px;width:1280px;height:1px;background:#9a9a9a"></div>
<div class="a" style="left:0;top:595px;width:1280px;height:18px;background:linear-gradient(#c1c1c1,#c4c4c4 50%,#d0d0d0)"></div>
<div class="a" style="left:0;top:613px;width:1280px;height:1px;background:#5c5c5c"></div>
<div class="t" style="left:3.3px;top:597.6px;font-size:10.70px;color:#1a1a1a;">Data Control Panel</div>
<svg class="a" style="left:1263px;top:597px" width="14" height="12" viewBox="0 0 14 12"><path d="M2.5 1.5 L10.8 9.8 M10.8 1.5 L2.5 9.8" stroke="#111" stroke-width="1.5"/></svg>
<div class="a" style="left:2px;top:614px;width:1274px;height:84px;background:#efefef;border-left:1px solid #8a8a8a;border-right:1px solid #c9c9c9;border-bottom:1px solid #9b9b9b;box-shadow:inset 0 1px 0 #fff"></div>
<div class="a" style="left:39px;top:624px;width:1202px;height:8px;background:#fff;border:1.5px solid #111"></div>
<div class="a" style="left:40px;top:640px;width:1200px;height:1px;background:#acacac"></div>
<div class="a" style="left:40px;top:642px;width:1200px;height:1px;background:#fafafa"></div>
<svg class="a" style="left:30px;top:628px" width="30" height="30" viewBox="30 628 30 30"><defs><linearGradient id="thg" x1="0" x2="1"><stop offset="0" stop-color="#fafafa"/><stop offset="0.5" stop-color="#e6e6e6"/><stop offset="1" stop-color="#d2d2d2"/></linearGradient></defs><path d="M38.6 636 Q38.6 634.5 40 634.5 H46 Q47.4 634.5 47.4 636 V647 L43 651.3 L38.6 647 Z" fill="url(#thg)" stroke="#7c7c7c" stroke-width="1"/></svg>
<div class="t" style="left:13.7px;top:635.3px;font-size:11.50px;color:#222;">0</div>
<div class="t" style="left:1260.7px;top:635.1px;font-size:11.50px;color:#222;">0</div>
<div class="t" style="left:13.3px;top:672.0px;font-size:11.50px;color:#222;">Frame:</div>
<div class="t" style="left:60.3px;top:672.0px;font-size:11.50px;color:#222;">0</div>
<div class="t" style="left:1151.8px;top:671.1px;font-size:12.10px;color:#222;">Time:</div>
<div class="t" style="left:1192.5px;top:670.5px;font-size:12.75px;color:#222;">00:00:00.000</div>
<div class="a" style="left:405px;top:666px;width:408px;height:23px;border-radius:4px 0 0 4px;background:linear-gradient(#f7f9fc,#e9eef5 50%,#dde4ee);box-shadow:0 1px 0 #c5c9cf"></div>
<svg class="a" style="left:400px;top:660px" width="420" height="36" viewBox="400 660 420 36">
<defs><linearGradient id="gb" x1="0" x2="0" y1="0" y2="1"><stop offset="0" stop-color="#9a9a9a"/><stop offset="1" stop-color="#555"/></linearGradient><radialGradient id="gg" cx="0.4" cy="0.35" r="0.6"><stop offset="0" stop-color="#a8e070"/><stop offset="1" stop-color="#3b9a1e"/></radialGradient><radialGradient id="rg" cx="0.4" cy="0.35" r="0.6"><stop offset="0" stop-color="#ff8a7a"/><stop offset="1" stop-color="#d01818"/></radialGradient><linearGradient id="sg" x1="0" x2="1" y1="0" y2="1"><stop offset="0" stop-color="#ff3a1a"/><stop offset="1" stop-color="#c81010"/></linearGradient></defs>
<rect x="409" y="670" width="3.5" height="14" rx="1" fill="url(#gb)"/><path d="M423 670 V684 L413.5 677Z" fill="url(#gb)"/>
<path d="M439 670 V684 L432 677Z M446 670 V684 L439 677Z" fill="url(#gb)"/>
<path d="M463 670 V684 L455 677Z" fill="url(#gb)"/><rect x="465" y="670" width="3.5" height="14" rx="1" fill="url(#gb)"/>
<circle cx="485" cy="677" r="5" fill="url(#gg)"/><circle cx="508" cy="677" r="5" fill="url(#rg)"/>
<rect x="525" y="670" width="4" height="14" rx="1" fill="url(#gb)"/><rect x="532.5" y="670" width="4" height="14" rx="1" fill="url(#gb)"/>
<path d="M548 670 V684 L560 677Z" fill="#a9a9a9" stroke="#8a8a8a" stroke-width="0.6"/>
<rect x="566.5" y="667" width="21.5" height="19" rx="2.5" fill="#d8dde4" stroke="#55606e" stroke-width="1.2"/><rect x="571" y="670.5" width="13.5" height="12.5" fill="url(#sg)" stroke="#9a1a10" stroke-width="0.6"/>
<rect x="593" y="670" width="3.5" height="14" rx="1" fill="url(#gb)"/><path d="M599 670 V684 L607 677Z" fill="url(#gb)"/>
<path d="M616 670 V684 L623 677Z M623 670 V684 L630 677Z" fill="url(#gb)"/>
<path d="M639 670 V684 L648 677Z" fill="url(#gb)"/><rect x="649.5" y="670" width="3.5" height="14" rx="1" fill="url(#gb)"/>
<path d="M660.5 668 V686 M737.5 668 V686" stroke="#6a7484" stroke-width="1"/>
<defs><linearGradient id="gdg" x1="0" y1="0" x2="1" y2="1"><stop offset="0" stop-color="#ffffff"/><stop offset="1" stop-color="#c9eeb0"/></linearGradient><linearGradient id="gfg" x1="0" y1="0" x2="0" y2="1"><stop offset="0" stop-color="#a6e070"/><stop offset="1" stop-color="#4aa82a"/></linearGradient></defs>
<path d="M671.5 670.5 H678.5 L683 675 V684.5 H671.5Z" fill="url(#gdg)" stroke="#3d8c22" stroke-width="1"/><path d="M678.5 670.5 V675 H683" fill="none" stroke="#3d8c22" stroke-width="0.8"/>
<path d="M700 672 L706.5 670.8 L707.3 680.5 L701 682Z" fill="#d8f0c0" stroke="#3a8a20" stroke-width="0.8"/><path d="M693.6 675.6 L703.8 673.8 L707.4 681 L697 685Z" fill="url(#gfg)" stroke="#3a8a20" stroke-width="0.8"/>
<rect x="716.5" y="670.5" width="13.5" height="14" rx="1.2" fill="#8c8c8c" stroke="#666" stroke-width="0.8"/><rect x="719" y="671" width="8.5" height="5.5" fill="#f2f2f2"/><path d="M719.8 672.6 H726.7 M719.8 674.5 H726.7" stroke="#b0b0b0" stroke-width="0.6"/><rect x="719.5" y="679.2" width="7.5" height="5.3" fill="#d4d4d4"/><rect x="720.6" y="680.2" width="2" height="3.6" fill="#777"/>
<path d="M748.5 670.2 V682.5 L751.5 680 L753.2 684 L755 683.2 L753.3 679.2 H757.5Z" fill="#b8bcc2" stroke="#8a8e94" stroke-width="0.8"/>
<path d="M756.3 676.8 H758.5 V679.1 H760.8 V681.3 H758.5 V683.6 H756.3 V681.3 H754 V679.1 H756.3Z" fill="#f4f4f4" stroke="#2a2a2a" stroke-width="0.9"/>
<path d="M771 679.5 L777.5 676.5 L783.5 679.5 L777 683.5Z" fill="#f0f2f4" stroke="#7d838a" stroke-width="0.8"/><path d="M777 683.5 L783.5 679.5 V680.8 L777 684.8Z" fill="#6d737a"/>
<path d="M776.8 670 L781.6 673.6 L779.6 674.6 L782 676.6 L777 679.8 L772.2 676.6 L774.6 674.6 L772.6 673.6Z" fill="#5cc42a" stroke="#2f8a14" stroke-width="0.7"/>
<rect x="793.6" y="670.6" width="13" height="13" fill="#fafbfc" stroke="#505050" stroke-width="1.1"/><path d="M793.6 675 H806.6 M793.6 679.3 H806.6 M798 670.6 V683.6 M802.3 670.6 V683.6" stroke="#9aa0a6" stroke-width="0.7"/><circle cx="800.2" cy="677.2" r="2.4" fill="#bfe3ec" stroke="#4aa6c0" stroke-width="0.9"/><path d="M803.5 680.5 L806 683" stroke="#d06a50" stroke-width="1.4"/>
</svg>
<div class="a" style="left:0;top:697px;width:1280px;height:1px;background:#8f8f8f"></div>
<div class="a" style="left:0;top:698px;width:1280px;height:22px;background:#ededed"></div>
<div class="a" style="left:415px;top:699px;width:1px;height:21px;background:#d2d2d2"></div><div class="a" style="left:416px;top:699px;width:1px;height:21px;background:#fafafa"></div>
<div class="a" style="left:767px;top:699px;width:1px;height:21px;background:#d2d2d2"></div><div class="a" style="left:768px;top:699px;width:1px;height:21px;background:#fafafa"></div>
<div class="a" style="left:1024px;top:699px;width:1px;height:21px;background:#d2d2d2"></div><div class="a" style="left:1025px;top:699px;width:1px;height:21px;background:#fafafa"></div>
<div class="a" style="left:419px;top:705px;width:17px;height:8px;background:#22e022;border:1px solid #0d4a0d"></div>
<div class="a" style="left:505px;top:705px;width:17px;height:8px;background:#22e022;border:1px solid #0d4a0d"></div>
<div class="t" style="left:441.4px;top:703.2px;font-size:12.30px;color:#111;font-weight:bold">Scan Tool</div>
<div class="t" style="left:527.3px;top:703.4px;font-size:12.00px;color:#111;font-weight:bold">Vehicle</div>
<div class="t" style="left:1033.2px;top:702.8px;font-size:12.95px;color:#222;">Registered To: 5W40 (Lexus &amp; BMW)</div>
</body></html>
